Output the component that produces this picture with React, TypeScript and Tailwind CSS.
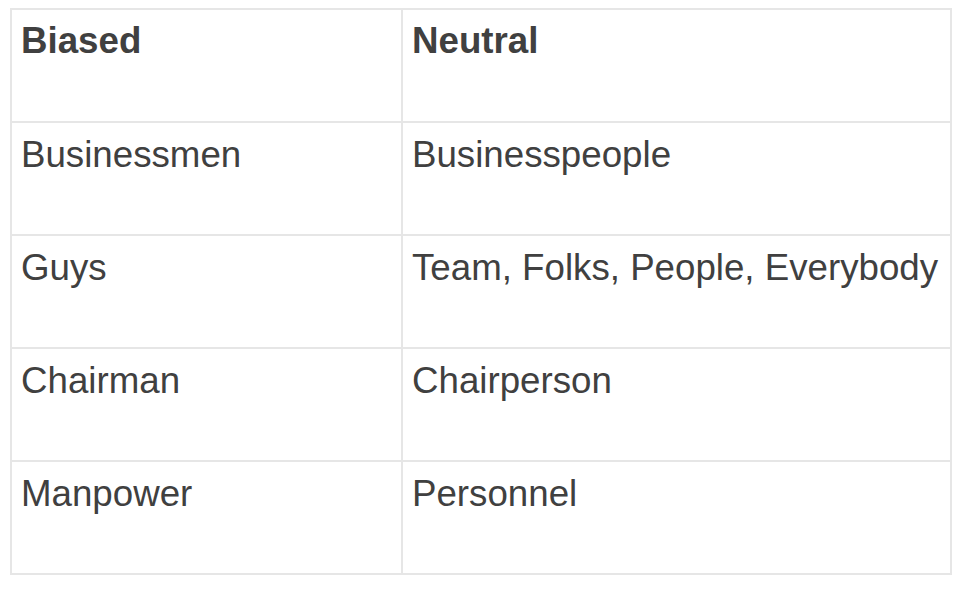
import React from "react";

const rows: [string, string][] = [
  ["Businessmen", "Businesspeople"],
  ["Guys", "Team, Folks, People, Everybody"],
  ["Chairman", "Chairperson"],
  ["Manpower", "Personnel"],
];

export default function App() {
  return (
    <div
      className="w-[980px] h-[592px] bg-white pt-[8px] pl-[10px] text-[#404040]"
      style={{ fontFamily: '"Liberation Sans", Arial, sans-serif' }}
    >
      <div className="w-[942px] border-2 border-[#e6e6e6] flex flex-col">
        <div className="flex h-[113px] border-b-2 border-[#e6e6e6]">
          <div className="w-[391px] border-r-2 border-[#e6e6e6] pl-[9px] pt-[10px] text-[36.7px] leading-[42px] font-bold">
            Biased
          </div>
          <div className="flex-1 pl-[9px] pt-[10px] text-[36.7px] leading-[42px] font-bold">
            Neutral
          </div>
        </div>
        {rows.map(([a, b], i) => (
          <div
            key={a}
            className={
              i < rows.length - 1
                ? "flex h-[113px] border-b-2 border-[#e6e6e6]"
                : "flex h-[111px]"
            }
          >
            <div className="w-[391px] border-r-2 border-[#e6e6e6] pl-[9px] pt-[11px] text-[36.7px] leading-[42px] whitespace-nowrap">
              {a}
            </div>
            <div className="flex-1 pl-[9px] pt-[11px] text-[36.7px] leading-[42px] whitespace-nowrap">
              {b}
            </div>
          </div>
        ))}
      </div>
    </div>
  );
}
